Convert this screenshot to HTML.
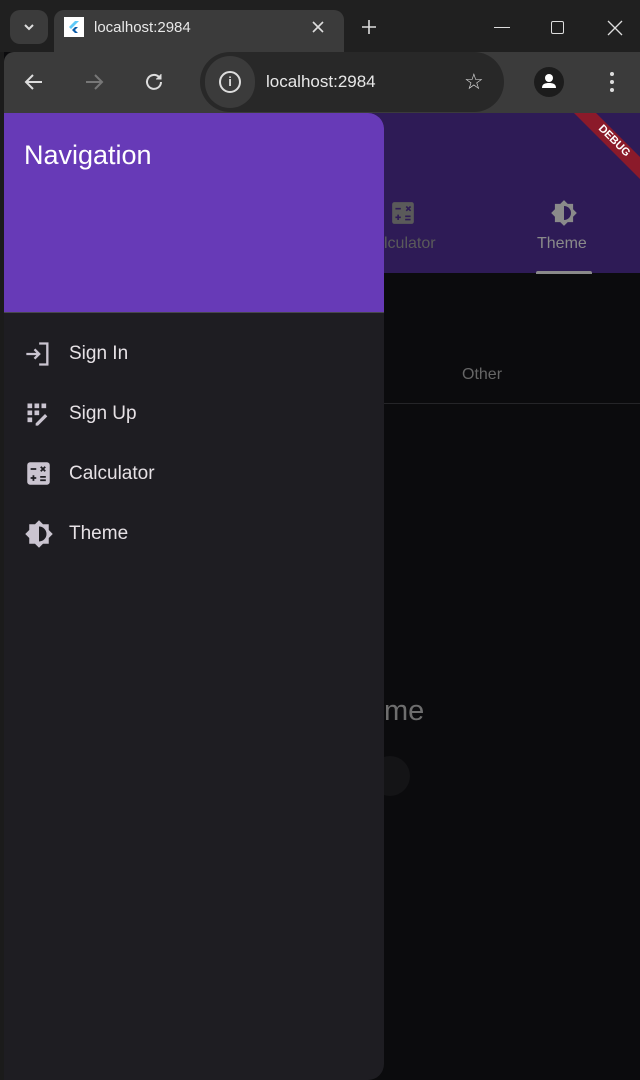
<!DOCTYPE html>
<html><head><style>
*{margin:0;padding:0;box-sizing:border-box}
body{width:640px;height:1080px;background:#0b0b0d;font-family:"Liberation Sans",sans-serif;position:relative;overflow:hidden}
.a{position:absolute}
</style></head><body>
<div class="a" style="left:0;top:0;width:640px;height:52px;background:#202020"></div>
<div class="a" style="left:10px;top:10px;width:38px;height:34px;border-radius:10px;background:#3b3b3b"></div>
<svg class="a" style="left:22px;top:20px" width="14" height="14" viewBox="0 0 14 14"><path d="M3 5l4 4 4-4" stroke="#ddd" stroke-width="2" fill="none"/></svg>
<div class="a" style="left:54px;top:10px;width:290px;height:44px;border-radius:10px 10px 0 0;background:#3b3b3b"></div>
<div class="a" style="left:64px;top:17px;width:20px;height:20px;background:#fff"></div>
<svg class="a" style="left:66px;top:19px" width="16" height="16" viewBox="0 0 16 16"><path d="M9 2L3 8l2 2 8-8z" fill="#5fc9f8"/><path d="M9 8L6 11l3 3h3l-3-3 3-3z" fill="#0d5ca8"/></svg>
<div class="a" style="left:94px;top:19px;color:#e8e8e8;font-size:15px">localhost:2984</div>
<svg class="a" style="left:312px;top:21px" width="12" height="12" viewBox="0 0 12 12"><path d="M1 1l10 10M11 1L1 11" stroke="#ddd" stroke-width="1.6"/></svg>
<svg class="a" style="left:362px;top:20px" width="14" height="14" viewBox="0 0 14 14"><path d="M7 0v14M0 7h14" stroke="#ddd" stroke-width="1.6"/></svg>
<div class="a" style="left:494px;top:27px;width:16px;height:1px;background:#ddd"></div>
<div class="a" style="left:551px;top:21px;width:13px;height:13px;border:1px solid #ddd;border-radius:2px"></div>
<svg class="a" style="left:607px;top:20px" width="16" height="16" viewBox="0 0 16 16"><path d="M1 1l14 14M15 1L1 15" stroke="#ddd" stroke-width="1.3"/></svg>
<div class="a" style="left:4px;top:52px;width:636px;height:61px;background:#3b3b3b;border-radius:10px 0 0 0"></div>
<svg class="a" style="left:22px;top:70px" width="24" height="24" viewBox="0 0 24 24"><path d="M20 12H5M11 5l-7 7 7 7" stroke="#ddd" stroke-width="2" fill="none"/></svg>
<svg class="a" style="left:82px;top:70px" width="24" height="24" viewBox="0 0 24 24"><path d="M4 12h15M13 5l7 7-7 7" stroke="#777" stroke-width="2" fill="none"/></svg>
<svg class="a" style="left:142px;top:70px" width="24" height="24" viewBox="0 0 24 24"><path d="M19 12a7 7 0 1 1-2-5" stroke="#ddd" stroke-width="2" fill="none"/><path d="M19 4v5h-5" fill="#ddd" stroke="#ddd" stroke-width="1"/></svg>
<div class="a" style="left:200px;top:52px;width:304px;height:60px;border-radius:30px;background:#282828"></div>
<div class="a" style="left:205px;top:56px;width:50px;height:52px;border-radius:26px;background:#3b3b3b"></div>
<div class="a" style="left:219px;top:71px;width:22px;height:22px;border:2px solid #ddd;border-radius:50%;color:#ddd;font-size:13px;font-weight:bold;text-align:center;line-height:18px">i</div>
<div class="a" style="left:266px;top:72px;color:#e8e8e8;font-size:17px">localhost:2984</div>
<div class="a" style="left:464px;top:69px;color:#ddd;font-size:22px">☆</div>
<div class="a" style="left:534px;top:67px;width:30px;height:30px;border-radius:50%;background:#1c1c1c"></div>
<svg class="a" style="left:539px;top:71px" width="20" height="20" viewBox="0 0 20 20"><circle cx="10" cy="7" r="4" fill="#fff"/><path d="M3 17c0-4 3-5 7-5s7 1 7 5z" fill="#fff"/></svg>
<div class="a" style="left:610px;top:72px;width:4px;height:4px;border-radius:2px;background:#ddd;box-shadow:0 8px #ddd,0 16px #ddd"></div>
<div class="a" style="left:4px;top:113px;width:636px;height:160px;background:#2e1b56"></div>
<svg class="a" style="left:560px;top:113px" width="80" height="80" viewBox="0 0 80 80"><path d="M14 0h22l44 44v22z" fill="#8b1a2a"/><text x="52" y="30" transform="rotate(45 52 30)" fill="#fff" font-size="11" font-weight="bold" text-anchor="middle" font-family="Liberation Sans">DEBUG</text></svg>
<svg class="a" style="left:390px;top:200px" width="26" height="26" viewBox="0 0 24 24"><rect x="2" y="2" width="20" height="20" rx="2" fill="#5a5a5a"/><path d="M5 8h5M15 6l4 4M19 6l-4 4M5 16h5M7.5 13.5v5M14 15h5M14 18h5" stroke="#2e1b56" stroke-width="1.5"/></svg>
<div class="a" style="left:384px;top:235px;color:#5a5a5a;font-size:16px">lculator</div>
<svg class="a" style="left:550px;top:199px" width="28" height="28" viewBox="0 0 24 24"><path d="M12 1l3.2 3.2H19.8V8.8L23 12l-3.2 3.2v4.6h-4.6L12 23l-3.2-3.2H4.2v-4.6L1 12l3.2-3.2V4.2h4.6z" fill="#8a8a8a"/><path d="M12 6a6 6 0 0 1 0 12z" fill="#2e1b56"/></svg>
<div class="a" style="left:537px;top:235px;color:#8a8a8a;font-size:16px">Theme</div>
<div class="a" style="left:536px;top:271px;width:56px;height:3px;border-radius:2px 2px 0 0;background:#8a8a8a"></div>
<div class="a" style="left:462px;top:366px;color:#666;font-size:16px">Other</div>
<div class="a" style="left:384px;top:403px;width:256px;height:1px;background:#252528"></div>
<div class="a" style="left:384px;top:695px;color:#6e6e6e;font-size:29px">me</div>
<div class="a" style="left:370px;top:756px;width:40px;height:40px;border-radius:50%;background:#141416"></div>
<div class="a" style="left:0;top:52px;width:4px;height:1028px;background:#1b1b1b"></div>
<div class="a" style="left:4px;top:113px;width:380px;height:967px;background:#1e1d22;border-radius:0 16px 16px 0;overflow:hidden">
<div style="height:199px;background:#673ab7;position:relative"><div class="a" style="left:20px;top:27px;color:#fff;font-size:27px">Navigation</div></div>
<div style="height:1px;background:#48474d"></div>
</div>
<svg class="a" style="left:24px;top:340px" width="28" height="28" viewBox="0 0 24 24"><path d="M2 12h11M9 8l4 4-4 4M13 3h7v18h-7" stroke="#cac4d0" stroke-width="2" fill="none"/></svg>
<div class="a" style="left:69px;top:343px;color:#e6e1e5;font-size:19px">Sign In</div>
<svg class="a" style="left:24px;top:400px" width="28" height="28" viewBox="0 0 24 24" fill="#cac4d0"><rect x="3" y="3" width="4" height="4"/><rect x="9" y="3" width="4" height="4"/><rect x="15" y="3" width="4" height="4"/><rect x="3" y="9" width="4" height="4"/><rect x="9" y="9" width="4" height="4"/><rect x="3" y="15" width="4" height="4"/><path d="M10 20l8-8 2 2-8 8h-2z"/></svg>
<div class="a" style="left:69px;top:403px;color:#e6e1e5;font-size:19px">Sign Up</div>
<svg class="a" style="left:25px;top:460px" width="27" height="27" viewBox="0 0 24 24"><rect x="2" y="2" width="20" height="20" rx="2.5" fill="#cac4d0"/><path d="M5 8h5M14 6l4 4M18 6l-4 4M5 16h5M7.5 13.5v5M13.5 15h5M13.5 18h5" stroke="#1e1d22" stroke-width="1.6"/></svg>
<div class="a" style="left:69px;top:463px;color:#e6e1e5;font-size:19px">Calculator</div>
<svg class="a" style="left:24px;top:519px" width="30" height="30" viewBox="0 0 24 24"><path d="M12 1l3.2 3.2H19.8V8.8L23 12l-3.2 3.2v4.6h-4.6L12 23l-3.2-3.2H4.2v-4.6L1 12l3.2-3.2V4.2h4.6z" fill="#cac4d0"/><path d="M12 6a6 6 0 0 1 0 12z" fill="#1e1d22"/></svg>
<div class="a" style="left:69px;top:523px;color:#e6e1e5;font-size:19px">Theme</div>
</body></html>
